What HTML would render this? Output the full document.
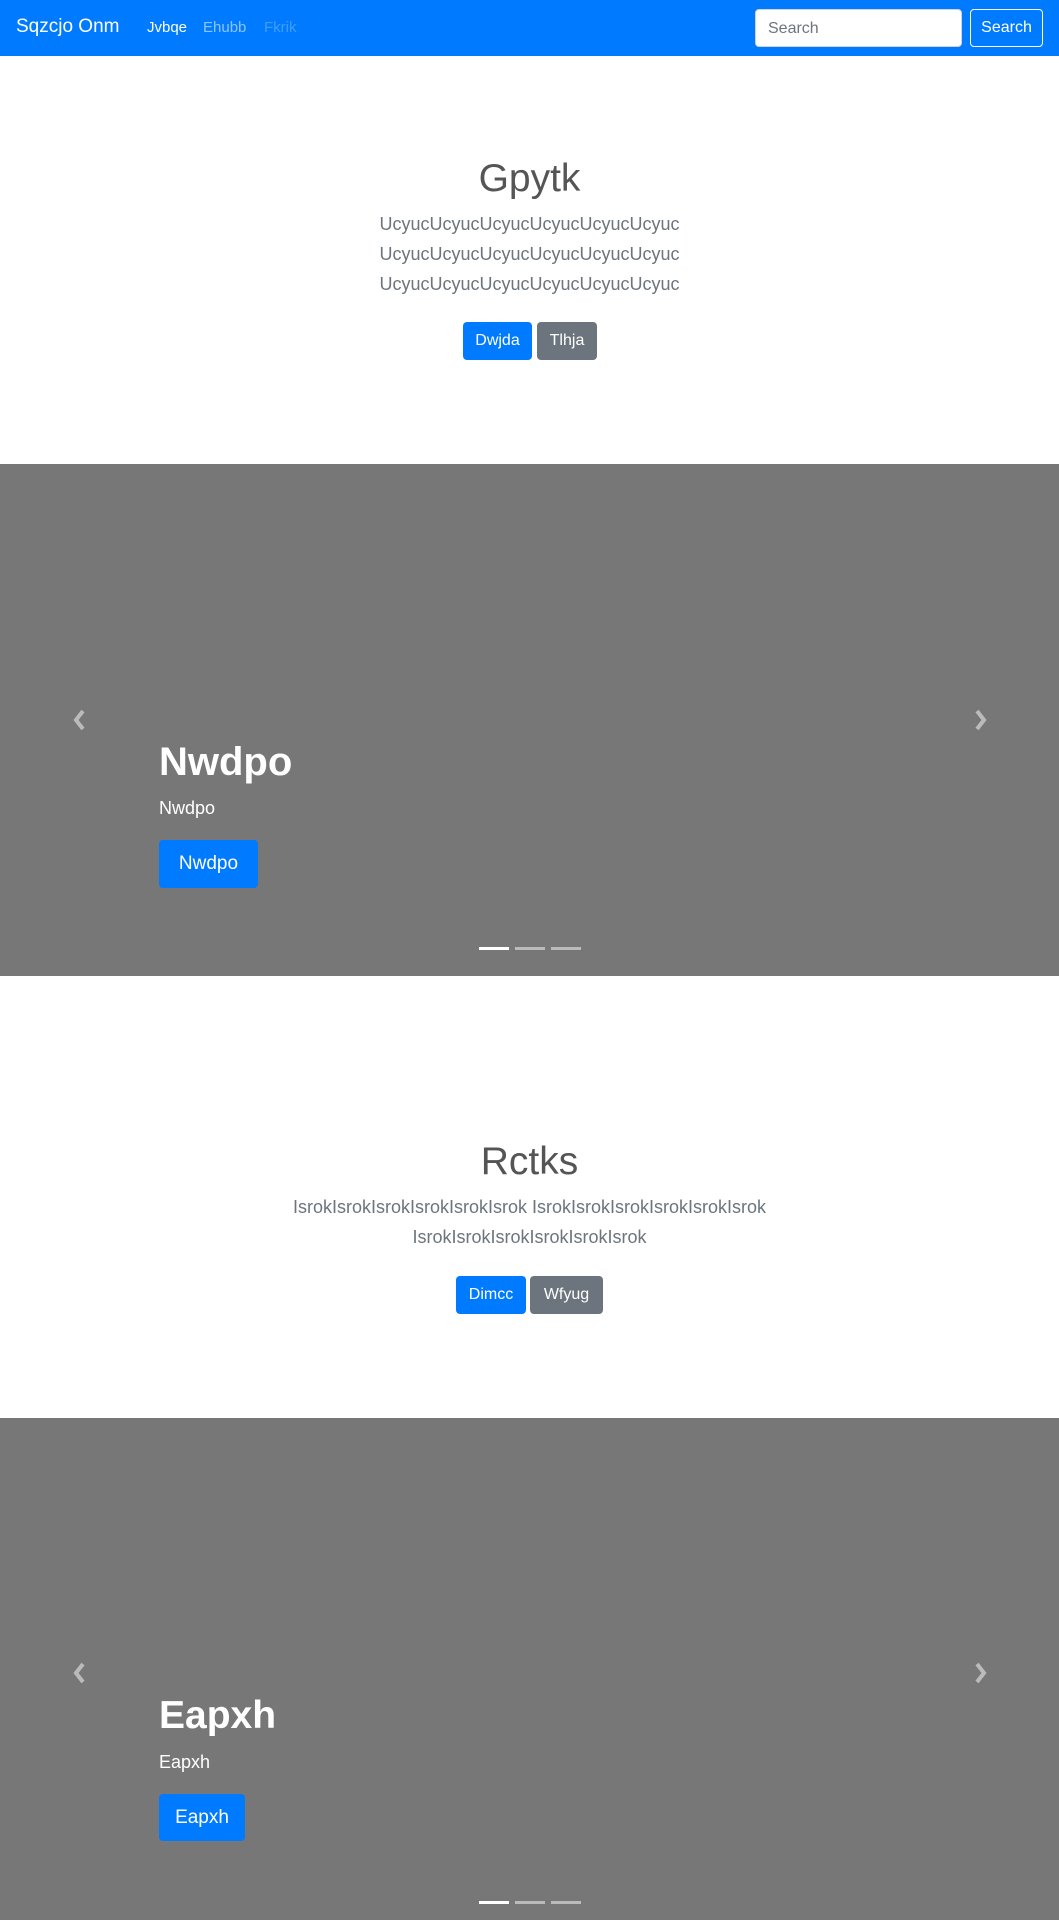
<!DOCTYPE html>
<html><head><meta charset="utf-8"><style>
*{box-sizing:border-box;margin:0;padding:0}
body{width:1059px;height:1920px;position:relative;overflow:hidden;background:#fff;font-family:"Liberation Sans",sans-serif}
.a{position:absolute}
.nav{left:0;top:0;width:1059px;height:56px;background:#007bff}
.c{left:0;width:1059px;text-align:center}
.t{font-size:39px;font-weight:300;color:#555;line-height:48px}
.lead{font-size:18px;font-weight:300;color:#6c757d;line-height:30px}
.btn{position:absolute;color:#fff;border-radius:4px;text-align:center;font-size:16px}
.gray{background:#777;left:0;width:1059px}
.ind{height:3px;width:30px;background:rgba(255,255,255,.5)}
</style></head><body>
<div class="a nav"></div>
<div class="a" style="left:16px;top:16px;color:#fff;font-size:19px">Sqzcjo Onm</div>
<div class="a" style="left:147px;top:19px;color:#fff;font-size:15px">Jvbqe</div>
<div class="a" style="left:203px;top:19px;color:rgba(255,255,255,.55);font-size:15px">Ehubb</div>
<div class="a" style="left:264px;top:19px;color:rgba(255,255,255,.25);font-size:15px">Fkrik</div>
<div class="a" style="left:755px;top:9px;width:207px;height:38px;background:#fff;border-radius:4px;border:1px solid #ced4da;padding:10px 12px;color:#6c757d;font-size:16px;line-height:18px">Search</div>
<div class="a" style="left:970px;top:9px;width:73px;height:38px;border:1px solid #fff;border-radius:4px;color:#fff;font-size:16px;text-align:center;line-height:36px">Search</div>

<div class="a c t" style="top:155px">Gpytk</div>
<div class="a c lead" style="top:209px">UcyucUcyucUcyucUcyucUcyucUcyuc<br>UcyucUcyucUcyucUcyucUcyucUcyuc<br>UcyucUcyucUcyucUcyucUcyucUcyuc</div>
<div class="btn" style="left:463px;top:322px;width:69px;height:38px;line-height:38px;background:#007bff">Dwjda</div>
<div class="btn" style="left:537px;top:322px;width:60px;height:38px;line-height:38px;background:#6c757d">Tlhja</div>

<div class="a gray" style="top:464px;height:512px"></div>
<svg class="a" style="left:70px;top:708px" width="20" height="24" viewBox="0 0 20 24"><path d="M13 3 L6 12 L13 21" stroke="#bbb" stroke-width="4" fill="none"/></svg>
<svg class="a" style="left:970px;top:708px" width="20" height="24" viewBox="0 0 20 24"><path d="M7 3 L14 12 L7 21" stroke="#bbb" stroke-width="4" fill="none"/></svg>
<div class="a" style="left:159px;top:737px;color:#fff;font-size:40px;font-weight:bold;line-height:50px">Nwdpo</div>
<div class="a" style="left:159px;top:796px;color:#fff;font-size:18px;line-height:24px">Nwdpo</div>
<div class="btn" style="left:159px;top:840px;width:99px;height:48px;line-height:48px;background:#007bff;font-size:19px">Nwdpo</div>
<div class="a ind" style="left:479px;top:947px;background:#fff"></div>
<div class="a ind" style="left:515px;top:947px"></div>
<div class="a ind" style="left:551px;top:947px"></div>

<div class="a c t" style="top:1138px">Rctks</div>
<div class="a c lead" style="top:1192px">IsrokIsrokIsrokIsrokIsrokIsrok IsrokIsrokIsrokIsrokIsrokIsrok<br>IsrokIsrokIsrokIsrokIsrokIsrok</div>
<div class="btn" style="left:456px;top:1276px;width:70px;height:38px;line-height:38px;background:#007bff">Dimcc</div>
<div class="btn" style="left:530px;top:1276px;width:73px;height:38px;line-height:38px;background:#6c757d">Wfyug</div>

<div class="a gray" style="top:1418px;height:502px"></div>
<svg class="a" style="left:70px;top:1661px" width="20" height="24" viewBox="0 0 20 24"><path d="M13 3 L6 12 L13 21" stroke="#bbb" stroke-width="4" fill="none"/></svg>
<svg class="a" style="left:970px;top:1661px" width="20" height="24" viewBox="0 0 20 24"><path d="M7 3 L14 12 L7 21" stroke="#bbb" stroke-width="4" fill="none"/></svg>
<div class="a" style="left:159px;top:1691px;color:#fff;font-size:39px;font-weight:bold;line-height:50px">Eapxh</div>
<div class="a" style="left:159px;top:1750px;color:#fff;font-size:18px;line-height:24px">Eapxh</div>
<div class="btn" style="left:159px;top:1794px;width:86px;height:47px;line-height:47px;background:#007bff;font-size:19px">Eapxh</div>
<div class="a ind" style="left:479px;top:1901px;background:#fff"></div>
<div class="a ind" style="left:515px;top:1901px"></div>
<div class="a ind" style="left:551px;top:1901px"></div>
</body></html>
